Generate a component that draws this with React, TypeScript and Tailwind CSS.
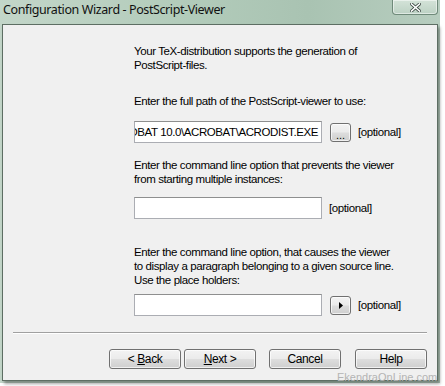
import React from "react";

const btn =
  "h-[20px] w-[72px] rounded-[3px] border border-[#707070] bg-[linear-gradient(#f3f3f3_0%,#ebebeb_48%,#dddddd_52%,#cfcfcf_100%)] text-[12px] leading-none text-black flex items-center justify-center shadow-[inset_0_0_0_1px_rgba(255,255,255,0.7)]";

const small =
  "h-[19px] w-[21px] rounded-[3px] border border-[#707070] bg-[linear-gradient(#f3f3f3_0%,#ebebeb_48%,#dddddd_52%,#cfcfcf_100%)] flex items-center justify-center shadow-[inset_0_0_0_1px_rgba(255,255,255,0.7)]";

const input = "h-[22px] w-[188px] bg-white border border-[#abadb3] border-t-[#8e8f8f]";

export default function App() {
  return (
    <div className="relative w-[445px] h-[386px] bg-white overflow-hidden font-['Liberation_Sans',Arial,sans-serif] text-[11.5px] tracking-[-0.4px] text-black">
      {/* window frame */}
      <div className="w-[440px] h-[383px] flex flex-col px-[2px] pb-[2px] bg-[linear-gradient(90deg,#c3d6c9,#b3ccbb_40%,#a9c3b2_70%,#b7cdbf)]">
        {/* title bar */}
        <div className="h-[24px] flex items-start">
          <span className="pl-[1px] pt-[2px] text-[12.5px] leading-[15px] text-[#111] font-['Noto_Sans',sans-serif] tracking-[-0.4px]">
            Configuration Wizard - PostScript-Viewer
          </span>
          <div className="ml-auto w-[46px] h-[15px] rounded-b-[4px] border border-t-0 border-[#6f8a7a] bg-[linear-gradient(#d4e3d8,#bcd1c3)] flex items-center justify-center shadow-[inset_0_0_0_1px_rgba(255,255,255,0.5)]">
            <svg width="11" height="9" viewBox="0 0 11 9">
              <path d="M1.5 1 L9.5 8 M9.5 1 L1.5 8" stroke="#3d4a44" strokeWidth="3.2" strokeLinecap="square" />
              <path d="M1.5 1 L9.5 8 M9.5 1 L1.5 8" stroke="#ffffff" strokeWidth="1.6" strokeLinecap="square" />
            </svg>
          </div>
        </div>

        {/* panel */}
        <div className="flex-1 bg-[#f0f0f0] border border-[#5d6e63] shadow-[2px_3px_3px_rgba(0,0,0,0.35)] flex flex-col pt-[19px]">
          <div className="pl-[131px] leading-[14px]">
            <p>Your TeX-distribution supports the generation of</p>
            <p>PostScript-files.</p>

            <p className="mt-[22px]">Enter the full path of the PostScript-viewer to use:</p>

            <div className="mt-[13px] flex items-center h-[22px]">
              <div className={input + " flex justify-end items-center overflow-hidden pr-[3px]"}>
                <span className="whitespace-nowrap">C:\PROGRAM FILES\ADOBE\ACROBAT 10.0\ACROBAT\ACRODIST.EXE</span>
              </div>
              <div className={small + " ml-[8px] mt-[1px]"}>
                <span className="text-[11px] leading-none mt-[6px] tracking-normal">...</span>
              </div>
              <span className="ml-[7px]">[optional]</span>
            </div>

            <p className="mt-[15px]">Enter the command line option that prevents the viewer</p>
            <p>from starting multiple instances:</p>

            <div className="mt-[11px] flex items-center h-[22px]">
              <div className={input} />
              <span className="ml-[7px]">[optional]</span>
            </div>

            <p className="mt-[26px]">Enter the command line option, that causes the viewer</p>
            <p>to display a paragraph belonging to a given source line.</p>
            <p>Use the place holders:</p>

            <div className="mt-[7px] flex items-center h-[22px]">
              <div className={input} />
              <div className={small + " ml-[8px]"}>
                <svg width="4" height="7" viewBox="0 0 4 7">
                  <path d="M0 0 L4 3.5 L0 7 Z" fill="#000" />
                </svg>
              </div>
              <span className="ml-[7px]">[optional]</span>
            </div>
          </div>

          <div className="mt-[16px] mx-[10px] h-px bg-[#a0a0a0] border-b border-white box-content" />

          <div className="mt-[15px] flex justify-end pr-[10px]">
            <button className={btn}>
              &lt; <span className="underline ml-[3px]">B</span>ack
            </button>
            <button className={btn + " ml-[3px]"}>
              <span className="underline">N</span>ext &gt;
            </button>
            <button className={btn + " ml-[13px]"}>Cancel</button>
            <button className={btn + " ml-[14px]"}>Help</button>
          </div>
        </div>
      </div>

      {/* watermark */}
      <span className="absolute left-[337px] top-[371px] text-[11px] leading-[12px] text-[#b4b4b4] tracking-normal">
        EkendraOnLine.com
      </span>
    </div>
  );
}
